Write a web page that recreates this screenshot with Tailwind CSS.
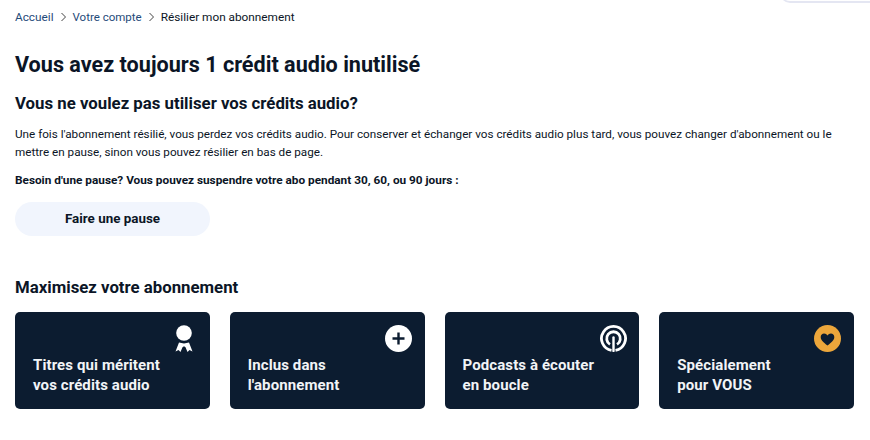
<!doctype html>
<html>
<head>
    <meta charset="UTF-8">
    <script src="https://cdn.jsdelivr.net/npm/@tailwindcss/browser@4"></script>
</head>
<body class="relative h-[440px] w-[870px] overflow-hidden bg-white font-['Roboto',sans-serif] text-[#0b1526]">
<div class="absolute -top-[30px] right-0 h-[33px] w-[90px] rounded-bl-[10px] border-b-2 border-l border-[#e4e6f2] bg-white"></div>

<main class="pl-[15px] pr-4 pt-[10px]">
    <nav class="flex h-[14px] items-center text-[11.8px] leading-[14px]">
        <a class="text-[#1f4b7a]" href="#">Accueil</a>
        <svg class="mx-[6px] w-[7px] h-[10px]" viewBox="0 0 7 10" fill="none" stroke="#444" stroke-width="1"><path d="M1.5 1l4 4-4 4"/></svg>
        <a class="text-[11.5px] text-[#1f4b7a]" href="#">Votre compte</a>
        <svg class="mx-[6px] w-[7px] h-[10px]" viewBox="0 0 7 10" fill="none" stroke="#444" stroke-width="1"><path d="M1.5 1l4 4-4 4"/></svg>
        <span>Résilier mon abonnement</span>
    </nav>

    <h1 class="mt-[26px] text-[21.6px] font-bold leading-[30px]">Vous avez toujours 1 crédit audio inutilisé</h1>
    <h2 class="mt-[11px] text-[16.8px] font-bold leading-[24px]">Vous ne voulez pas utiliser vos crédits audio?</h2>

    <p class="mt-[10px] w-[830px] text-[11.7px] leading-[18px]">Une fois l'abonnement résilié, vous perdez vos crédits audio. Pour conserver et échanger vos crédits audio plus tard, vous pouvez changer d'abonnement ou le mettre en pause, sinon vous pouvez résilier en bas de page.</p>
    <p class="mt-[11px] text-[11.8px] font-bold leading-[16px]">Besoin d'une pause? Vous pouvez suspendre votre abo pendant 30, 60, ou 90 jours :</p>

    <button class="mt-[14px] block h-[34px] w-[195px] rounded-full bg-[#f1f5fd] text-[13.4px] font-bold">Faire une pause</button>

    <h2 class="mt-[39px] text-[16.8px] font-bold leading-[24px]">Maximisez votre abonnement</h2>

    <div class="mt-[13px] grid w-[839px] grid-cols-4 gap-[20px]">
        <a class="relative flex h-[97px] items-end rounded-[5px] bg-[#0c1c30] px-[18px] pb-[14px] text-[15px] font-bold leading-[20px] tracking-[0.1px] text-[#f2f4f7]" href="#">
            <span>Titres qui méritent<br>vos crédits audio</span>
            <svg class="absolute right-[17px] top-[13px] h-[28px] w-[18px]" viewBox="0 0 18 28" fill="#fff">
                <circle cx="9" cy="8" r="7.8"/>
                <path d="M4 17.500l-3.500 9 3-1.600 2 2 2-4.600 1.500-1 1.500 1 2 4.600 2-2 3 1.600-3.500-9-5 1z"/>
            </svg>
        </a>
        <a class="relative flex h-[97px] items-end rounded-[5px] bg-[#0c1c30] px-[18px] pb-[14px] text-[15px] font-bold leading-[20px] tracking-[0.1px] text-[#f2f4f7]" href="#">
            <span>Inclus dans<br>l'abonnement</span>
            <svg class="absolute right-[13px] top-[13px] h-[27px] w-[27px]" viewBox="0 0 27 27">
                <circle cx="13.5" cy="13.5" r="13.5" fill="#fff"/>
                <path d="M13.5 7.500v12M7.500 13.500h12" stroke="#0c1c30" stroke-width="2.4"/>
            </svg>
        </a>
        <a class="relative flex h-[97px] items-end rounded-[5px] bg-[#0c1c30] px-[18px] pb-[14px] text-[15px] font-bold leading-[20px] tracking-[0.1px] text-[#f2f4f7]" href="#">
            <span>Podcasts à écouter<br>en boucle</span>
            <svg class="absolute right-[12px] top-[13px] h-[27px] w-[27px]" viewBox="0 0 27 27" fill="none" stroke="#fff">
                <path stroke-width="2.800" d="M11.500 25.300a12 12 0 1 1 4 0"/>
                <path stroke-width="2.800" d="M10 19.400a6.800 6.800 0 1 1 7 0"/>
                <path stroke-width="2.400" stroke-linecap="round" d="M13.500 26V12.500"/>
            </svg>
        </a>
        <a class="relative flex h-[97px] items-end rounded-[5px] bg-[#0c1c30] px-[18px] pb-[14px] text-[15px] font-bold leading-[20px] tracking-[0.1px] text-[#f2f4f7]" href="#">
            <span>Spécialement<br>pour VOUS</span>
            <svg class="absolute right-[13px] top-[13px] h-[27px] w-[27px]" viewBox="0 0 27 27">
                <circle cx="13.5" cy="13.5" r="13.5" fill="#eca63b"/>
                <path d="M13.500 20.500c-4-3-6.800-5.400-6.800-8.500 0-2.200 1.600-3.600 3.400-3.600 1.400 0 2.600.7 3.400 2 .8-1.300 2-2 3.400-2 1.800 0 3.400 1.400 3.400 3.600 0 3.100-2.800 5.500-6.800 8.500z" fill="#0c1c30"/>
            </svg>
        </a>
    </div>
</main>
</body>
</html>
